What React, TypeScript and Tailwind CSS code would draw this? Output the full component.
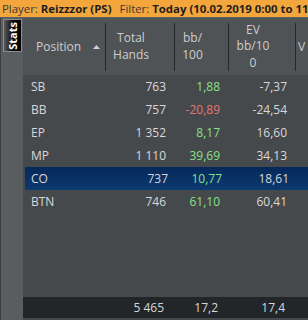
import { Fragment } from 'react';

type Row = { pos: string; hands: string; bb: string; ev: string; selected?: boolean };

const ROWS: Row[] = [
  { pos: 'SB', hands: '763', bb: '1,88', ev: '-7,37' },
  { pos: 'BB', hands: '757', bb: '-20,89', ev: '-24,54' },
  { pos: 'EP', hands: '1 352', bb: '8,17', ev: '16,60' },
  { pos: 'MP', hands: '1 110', bb: '39,69', ev: '34,13' },
  { pos: 'CO', hands: '737', bb: '10,77', ev: '18,61', selected: true },
  { pos: 'BTN', hands: '746', bb: '61,10', ev: '60,41' },
];

const COLS = 'grid grid-cols-[82px_69px_54px_67px_1fr]';

function HeaderCell({ children, sep = true }: { children: React.ReactNode; sep?: boolean }) {
  return (
    <div className="flex items-center h-full">
      {sep && <div className="w-px h-[48px] bg-[#26292c] shrink-0" />}
      <div className="flex-1 pr-[18px] text-center leading-[16.5px]">{children}</div>
    </div>
  );
}

function valueColor(v: string) {
  return v.startsWith('-') ? 'text-[#e87474]' : 'text-[#88e088]';
}

export default function App() {
  return (
    <div className="w-[308px] h-[320px] flex flex-col overflow-hidden bg-[#46494c] text-[12px] font-['Open_Sans',sans-serif]">
      <div className="h-[18px] shrink-0 bg-[#f3a63c] border-b border-[#5b5f62] pl-[2px] leading-[17px] whitespace-nowrap text-[11.4px] text-[#3a3a3a] overflow-hidden">
        Player: <b className="text-[#1e1e1e]">Reizzzor (PS)</b>
        <span className="ml-[8px]">Filter: </span>
        <b className="text-[#1e1e1e]">Today (10.02.2019 0:00 to 11.02.2019 23:59)</b>
      </div>

      <div className="flex flex-1 min-h-0">
        <div className="w-[23px] shrink-0 bg-[#595d60] border-l border-[#3c3f42] pt-[1px] pl-[2px]">
          <div className="w-[19px] h-[33px] border border-[#8a8d90] bg-gradient-to-r from-[#5a5a5a] via-[#101010] to-black flex items-center justify-center">
            <span className="[writing-mode:vertical-rl] rotate-180 text-white font-bold text-[11px] leading-none">
              Stats
            </span>
          </div>
        </div>

        <div className="flex-1 flex flex-col min-w-0 text-[#d8d8d8]">
          <div className={`${COLS} h-[57px] bg-[#4f5356] text-[#cdcdcd] shrink-0`}>
            <div className="flex items-center h-full pl-[13px]">
              <span>Position</span>
              <svg width="7" height="4" viewBox="0 0 7 4" className="ml-[12px]">
                <path d="M0 4 L3.5 0 L7 4 Z" fill="#d0d0d0" />
              </svg>
            </div>
            <HeaderCell>
              Total
              <br />
              Hands
            </HeaderCell>
            <HeaderCell>
              bb/
              <br />
              100
            </HeaderCell>
            <HeaderCell>
              EV
              <br />
              bb/10
              <br />0
            </HeaderCell>
            <div className="flex items-center h-full">
              <div className="w-px h-[48px] bg-[#26292c] shrink-0" />
              <span className="pl-[2px]">V</span>
            </div>
          </div>

          <div className="flex flex-col">
            {ROWS.map((r) => (
              <div
                key={r.pos}
                className={`${COLS} h-[23px] items-center ${
                  r.selected ? 'bg-gradient-to-b from-[#06285a] to-[#0d3a72] ml-[2px]' : ''
                }`}
              >
                <Fragment>
                  <div className={r.selected ? 'pl-[6px]' : 'pl-[8px]'}>{r.pos}</div>
                  <div className="text-right pr-[8px]">{r.hands}</div>
                  <div className={`text-right pr-[8px] ${valueColor(r.bb)}`}>{r.bb}</div>
                  <div className="text-right pr-[8px]">{r.ev}</div>
                  <div />
                </Fragment>
              </div>
            ))}
          </div>

          <div className="flex-1" />

          <div className={`${COLS} h-[21px] items-center bg-[#222629] shrink-0`}>
            <div />
            <div className="text-right pr-[10px]">5 465</div>
            <div className="text-right pr-[10px]">17,2</div>
            <div className="text-right pr-[10px]">17,4</div>
            <div />
          </div>
          <div className="h-[2px] shrink-0" />
        </div>
      </div>
    </div>
  );
}
